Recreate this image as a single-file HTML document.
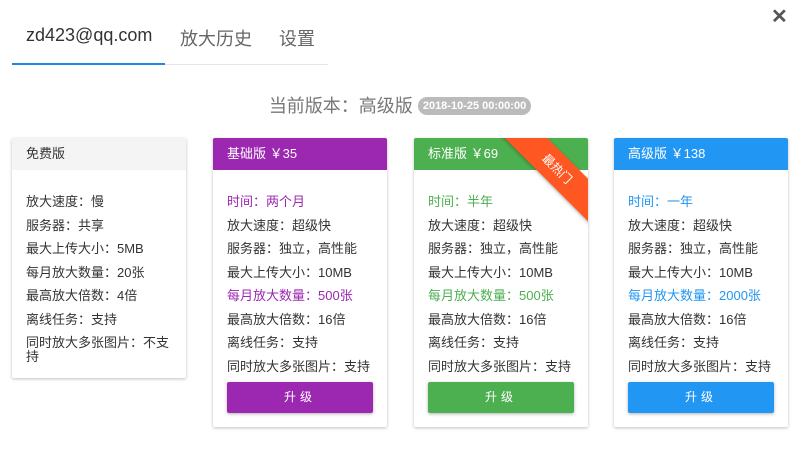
<!DOCTYPE html>
<html><head><meta charset="utf-8"><style>
*{margin:0;padding:0;box-sizing:border-box}
body{width:800px;height:462px;background:#fff;font-family:"Liberation Sans","Noto Sans CJK SC",sans-serif;position:relative;overflow:hidden;color:#333}
.close{position:absolute;left:771px;top:4px;font-size:20px;color:#555;font-weight:bold}
.tab{position:absolute;top:25px;font-size:18px;color:#666}
.ul{position:absolute;top:63px;height:2px}
.title{position:absolute;top:92px;left:0;width:800px;text-align:center;font-size:18px;color:#777}
.badge{display:inline-block;background:#bbb;color:#fff;font-size:11px;font-weight:bold;border-radius:9px;padding:3px 5px;vertical-align:3px}
.card{position:absolute;top:138px;width:174px;background:#fff;box-shadow:0 1px 3px rgba(0,0,0,.25);border-radius:2px;overflow:hidden}
.hd{height:32px;line-height:32px;padding-left:14px;font-size:13px;color:#fff}
.bd{padding:20px 14px 0 14px;font-size:13px;line-height:23.5px}
.btn{margin:4px 0 14px 0;height:31px;line-height:31px;text-align:center;color:#fff;font-size:12px;border-radius:2px;box-shadow:0 1px 3px rgba(0,0,0,.3);letter-spacing:4px}
.rib{position:absolute;left:53px;top:16px;width:180px;height:30px;line-height:30px;background:#ff5722;color:#fff;font-size:12px;text-align:center;transform:rotate(45deg);box-shadow:0 1px 3px rgba(0,0,0,.3)}
</style></head><body>
<div class="close">✕</div>
<div class="tab" style="left:26px;color:#333">zd423@qq.com</div>
<div class="tab" style="left:180px">放大历史</div>
<div class="tab" style="left:279px">设置</div>
<div class="ul" style="left:12px;width:316px;background:#e5e5e5;height:1px;top:64px"></div>
<div class="ul" style="left:12px;width:153px;background:#1e88e5"></div>
<div class="title">当前版本：高级版 <span class="badge">2018-10-25 00:00:00</span></div>

<div class="card" style="left:12px">
<div class="hd" style="background:#f4f4f4;color:#333">免费版</div>
<div class="bd" style="padding-bottom:14px">放大速度：慢<br>服务器：共享<br>最大上传大小：5MB<br>每月放大数量：20张<br>最高放大倍数：4倍<br>离线任务：支持<br><span style="line-height:14px;display:block;margin-top:5px">同时放大多张图片：不支持</span></div>
</div>

<div class="card" style="left:213px">
<div class="hd" style="background:#9c27b0">基础版 ￥35</div>
<div class="bd"><span style="color:#9c27b0">时间：两个月</span><br>放大速度：超级快<br>服务器：独立，高性能<br>最大上传大小：10MB<br><span style="color:#9c27b0">每月放大数量：500张</span><br>最高放大倍数：16倍<br>离线任务：支持<br>同时放大多张图片：支持
<div class="btn" style="background:#9c27b0">升级</div></div>
</div>

<div class="card" style="left:414px">
<div class="hd" style="background:#4caf50">标准版 ￥69</div>
<div class="bd"><span style="color:#4caf50">时间：半年</span><br>放大速度：超级快<br>服务器：独立，高性能<br>最大上传大小：10MB<br><span style="color:#4caf50">每月放大数量：500张</span><br>最高放大倍数：16倍<br>离线任务：支持<br>同时放大多张图片：支持
<div class="btn" style="background:#4caf50">升级</div></div>
<div class="rib">最热门</div>
</div>

<div class="card" style="left:614px">
<div class="hd" style="background:#2196f3">高级版 ￥138</div>
<div class="bd"><span style="color:#2196f3">时间：一年</span><br>放大速度：超级快<br>服务器：独立，高性能<br>最大上传大小：10MB<br><span style="color:#2196f3">每月放大数量：2000张</span><br>最高放大倍数：16倍<br>离线任务：支持<br>同时放大多张图片：支持
<div class="btn" style="background:#2196f3">升级</div></div>
</div>
</body></html>
